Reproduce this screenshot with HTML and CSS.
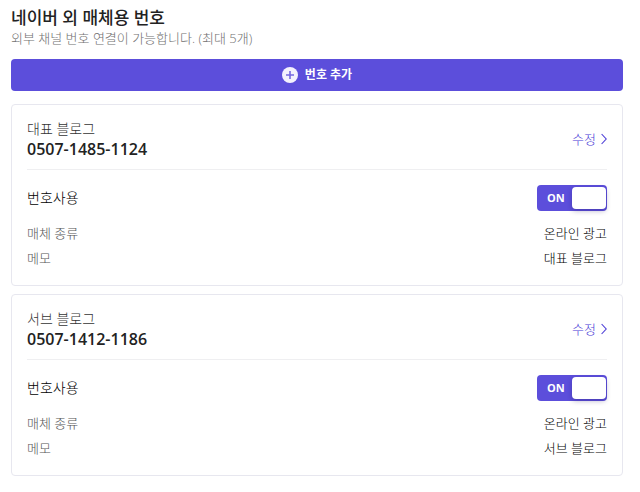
FILE: index.html
```html
<!DOCTYPE html>
<html lang="ko">
<head>
<meta charset="utf-8">
<meta name="viewport" content="width=device-width, initial-scale=1">
<title>네이버 외 매체용 번호</title>
<link rel="stylesheet" href="styles.css">
</head>
<body>
<main class="page">
  <header class="heading">
    <h1 class="title">네이버 외 매체용 번호</h1>
    <p class="subtitle">외부 채널 번호 연결이 가능합니다. (최대 5개)</p>
  </header>
  <button class="add" type="button">
    <svg class="add-icon" viewBox="0 0 16 16" aria-hidden="true"><circle cx="8" cy="8" r="8" fill="#f3f1fd"/><path d="M8 4v8M4 8h8" stroke="#7568e0" stroke-width="1.6"/></svg>
    <span>번호 추가</span>
  </button>
  <section class="card">
    <div class="card-head">
      <div>
        <h2 class="name">대표 블로그</h2>
        <p class="number">0507-1485-1124</p>
      </div>
      <a class="edit" href="#">수정<svg class="chevron" viewBox="0 0 6 12" aria-hidden="true"><path d="M.6 1 5.2 6 .6 11" fill="none" stroke="currentColor" stroke-width="1.1"/></svg></a>
    </div>
    <div class="usage">
      <label class="usage-label" for="use-main">번호사용</label>
      <label class="switch"><input id="use-main" type="checkbox" role="switch" checked><span class="state">ON</span><span class="thumb"></span></label>
    </div>
    <dl class="details">
      <div class="detail"><dt>매체 종류</dt><dd>온라인 광고</dd></div>
      <div class="detail"><dt>메모</dt><dd>대표 블로그</dd></div>
    </dl>
  </section>
  <section class="card">
    <div class="card-head">
      <div>
        <h2 class="name">서브 블로그</h2>
        <p class="number">0507-1412-1186</p>
      </div>
      <a class="edit" href="#">수정<svg class="chevron" viewBox="0 0 6 12" aria-hidden="true"><path d="M.6 1 5.2 6 .6 11" fill="none" stroke="currentColor" stroke-width="1.1"/></svg></a>
    </div>
    <div class="usage">
      <label class="usage-label" for="use-sub">번호사용</label>
      <label class="switch"><input id="use-sub" type="checkbox" role="switch" checked><span class="state">ON</span><span class="thumb"></span></label>
    </div>
    <dl class="details">
      <div class="detail"><dt>매체 종류</dt><dd>온라인 광고</dd></div>
      <div class="detail"><dt>메모</dt><dd>서브 블로그</dd></div>
    </dl>
  </section>
</main>
</body>
</html>
```
FILE: styles.css
```css
* {
  box-sizing: border-box;
}

body {
  margin: 0;
  background: #fff;
  color: #222;
  font: 13px/20px "Open Sans", "Noto Sans CJK KR", sans-serif;
}

h1, h2, p, dl, dd {
  margin: 0;
}

.page {
  display: flex;
  flex-direction: column;
  gap: 8px;
  padding: 8px 17px 16px 11px;
}

.heading {
  margin-bottom: 3px;
}

.title {
  font-size: 17px;
  font-weight: 500;
  line-height: 20px;
  color: #222;
}

.subtitle {
  color: #707070;
  font-weight: 300;
}

.add {
  display: flex;
  align-items: center;
  justify-content: center;
  gap: 7px;
  height: 32px;
  margin-bottom: 5px;
  border: 0;
  border-radius: 4px;
  background: #5c4edb;
  color: #fff;
  font: inherit;
  font-size: 12px;
  font-weight: 700;
}

.add-icon {
  width: 16px;
  height: 16px;
}

.card {
  padding: 14px 15px 17px;
  border: 1px solid #e7e7ef;
  border-radius: 4px;
}

.card-head {
  display: flex;
  align-items: center;
  justify-content: space-between;
  padding-bottom: 10px;
  border-bottom: 1px solid #efeff1;
}

.name {
  font-size: 14px;
  font-weight: 300;
  line-height: 20px;
  color: #333;
}

.number {
  font-size: 16px;
  font-weight: 600;
  line-height: 20px;
  color: #222;
}

.edit {
  display: flex;
  align-items: center;
  gap: 5px;
  color: #4a3bd6;
  font-weight: 300;
  text-decoration: none;
}

.chevron {
  width: 6px;
  height: 12px;
}

.usage {
  display: flex;
  align-items: center;
  justify-content: space-between;
  margin: 15px 0 12px;
}

.usage-label {
  color: #000;
  font-size: 14px;
  font-weight: 300;
}

.switch {
  position: relative;
  display: flex;
  align-items: center;
  justify-content: space-between;
  width: 70px;
  height: 26px;
  padding: 0 1px 0 10px;
  border-radius: 4px;
  background: #5c4edb;
  color: #fff;
  font-size: 11px;
  font-weight: 700;
}

.switch input {
  position: absolute;
  inset: 0;
  width: 100%;
  height: 100%;
  margin: 0;
  opacity: 0;
}

.thumb {
  width: 34px;
  height: 22px;
  border-radius: 4px;
  background: #fff;
  box-shadow: 0 2px 5px rgba(30, 20, 90, 0.3);
}

.details {
  display: grid;
  gap: 5px;
  color: #000;
  font-weight: 300;
}

.detail {
  display: flex;
  justify-content: space-between;
}

.detail dt {
  color: #555;
}
```
